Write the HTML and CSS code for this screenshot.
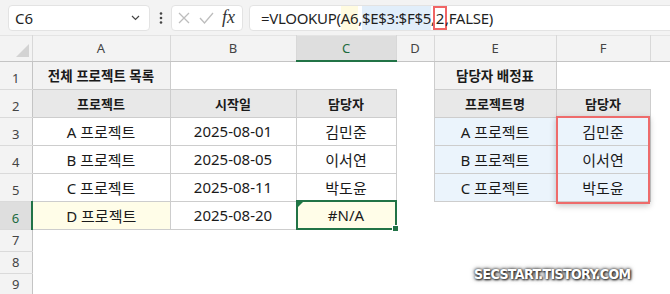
FILE: index.html
```html
<!DOCTYPE html>
<html lang="ko">
<head>
  <meta charset="UTF-8">
  <title>VLOOKUP #N/A</title>
  <link rel="stylesheet" href="styles.css">
</head>
<body>
  <div class="app">
    <div class="formula-bar">
      <div class="name-box">
        <span>C6</span>
        <svg width="9" height="6" viewBox="0 0 9 6"><polyline points="1,1 4.5,4.5 8,1" fill="none" stroke="#444" stroke-width="1.2"/></svg>
      </div>
      <div class="kebab">
        <svg width="4" height="12" viewBox="0 0 4 12"><circle cx="2" cy="1.5" r="1.3" fill="#444"/><circle cx="2" cy="6" r="1.3" fill="#444"/><circle cx="2" cy="10.5" r="1.3" fill="#444"/></svg>
      </div>
      <div class="fx-box">
        <svg width="12" height="12" viewBox="0 0 12 12"><path d="M1 1 L11 11 M11 1 L1 11" stroke="#bdbdbd" stroke-width="1.3"/></svg>
        <svg width="15" height="12" viewBox="0 0 15 12"><polyline points="1,6 5.5,11 14,1" fill="none" stroke="#bdbdbd" stroke-width="1.3"/></svg>
        <span class="fx">fx</span>
      </div>
      <div class="formula">=VLOOKUP(<span class="ref-a">A6</span>,<span class="ref-e">$E$3:$F$5</span>,<span class="mark">2</span>,FALSE)</div>
    </div>

    <table class="sheet">
      <colgroup>
        <col style="width:32px"><col style="width:138px"><col style="width:126px"><col style="width:100px">
        <col style="width:38px"><col style="width:122px"><col style="width:94px"><col style="width:20px">
      </colgroup>
      <tr class="col-head">
        <th class="corner"><svg width="32" height="24" viewBox="0 0 32 24"><polygon points="29,8 29,21 16,21" fill="#d3d3d3"/></svg></th>
        <th>A</th><th>B</th><th class="sel-col">C</th><th>D</th><th>E</th><th>F</th><th></th>
      </tr>
      <tr class="r">
        <td class="rh">1</td>
        <td class="cell title">전체 프로젝트 목록</td><td></td><td></td><td></td>
        <td class="cell title">담당자 배정표</td><td></td><td></td>
      </tr>
      <tr class="r">
        <td class="rh">2</td>
        <td class="cell head">프로젝트</td><td class="cell head">시작일</td><td class="cell head">담당자</td><td></td>
        <td class="cell head">프로젝트명</td><td class="cell head">담당자</td><td></td>
      </tr>
      <tr class="r">
        <td class="rh">3</td>
        <td class="cell">A 프로젝트</td><td class="cell">2025-08-01</td><td class="cell">김민준</td><td></td>
        <td class="cell blue">A 프로젝트</td>
        <td class="cell blue anchor">김민준<div class="result-box"></div></td><td></td>
      </tr>
      <tr class="r">
        <td class="rh">4</td>
        <td class="cell">B 프로젝트</td><td class="cell">2025-08-05</td><td class="cell">이서연</td><td></td>
        <td class="cell blue">B 프로젝트</td><td class="cell blue">이서연</td><td></td>
      </tr>
      <tr class="r">
        <td class="rh">5</td>
        <td class="cell">C 프로젝트</td><td class="cell">2025-08-11</td><td class="cell">박도윤</td><td></td>
        <td class="cell blue">C 프로젝트</td><td class="cell blue">박도윤</td><td></td>
      </tr>
      <tr class="r">
        <td class="rh sel-row">6</td>
        <td class="cell yellow">D 프로젝트</td><td class="cell">2025-08-20</td>
        <td class="cell yellow anchor">#N/A<div class="active"><span class="flag"></span><span class="handle"></span></div></td>
        <td></td><td></td><td></td><td></td>
      </tr>
      <tr class="s"><td class="rh">7</td><td></td><td></td><td></td><td></td><td></td><td></td><td></td></tr>
      <tr class="s"><td class="rh">8</td><td></td><td></td><td></td><td></td><td></td><td></td><td></td></tr>
      <tr class="s"><td class="rh">9</td><td></td><td></td><td></td><td></td><td></td><td></td><td></td></tr>
    </table>

    <div class="watermark">SECSTART.TISTORY.COM</div>
  </div>
</body>
</html>
```

FILE: styles.css
```css
body {
  margin: 0;
  font-family: "Noto Sans", "Noto Sans CJK KR", sans-serif;
  color: #1f1f1f;
  background-color: #fff;
}

.app {
  position: relative;
  width: 670px;
  height: 294px;
  overflow: hidden;
}

/* Formula bar */
.formula-bar {
  height: 35px;
  box-sizing: border-box;
  padding-left: 8px;
  display: flex;
  align-items: center;
  background-color: #f3f3f3;
}

.name-box {
  width: 142px;
  height: 26px;
  box-sizing: border-box;
  padding: 0 9px 0 6px;
  display: flex;
  align-items: center;
  justify-content: space-between;
  background-color: #fff;
  border: 1px solid #e3e3e3;
  border-radius: 4px;
  font-size: 15px;
}

.kebab {
  width: 21px;
  display: flex;
  justify-content: center;
}

.fx-box {
  width: 72px;
  height: 26px;
  box-sizing: border-box;
  padding-left: 6px;
  display: flex;
  align-items: center;
  gap: 9px;
  background-color: #fff;
  border: 1px solid #e3e3e3;
  border-radius: 4px;
}

.fx {
  font-family: "Liberation Serif", serif;
  font-style: italic;
  font-size: 18px;
  color: #333;
  margin-left: -1px;
}

.formula {
  flex: 1;
  height: 26px;
  margin-left: 6px;
  margin-right: -10px;
  box-sizing: border-box;
  padding-left: 11px;
  display: flex;
  align-items: center;
  background-color: #fff;
  border: 1px solid #e3e3e3;
  border-radius: 4px;
  font-size: 15px;
  letter-spacing: -0.3px;
  white-space: pre;
}

.ref-a {
  background-color: #fffbe0;
  line-height: 24px;
}

.ref-e {
  background-color: #e1eefa;
  line-height: 24px;
}

.mark {
  display: inline-block;
  padding: 0 1px;
  line-height: 20px;
  outline: 2px solid #f06565;
  outline-offset: 0;
}

/* Sheet grid */
.sheet {
  width: 670px;
  table-layout: fixed;
  border-collapse: collapse;
}

.sheet td,
.sheet th {
  padding: 0;
  overflow: hidden;
  white-space: nowrap;
}

.sheet td.anchor {
  position: relative;
  overflow: visible;
}

.col-head th {
  height: 24px;
  background-color: #f3f3f3;
  border-top: 1px solid #e4e4e4;
  border-right: 1px solid #d8d8d8;
  border-bottom: 1px solid #c4c4c4;
  font-weight: normal;
  font-size: 13px;
  color: #444;
}

.col-head th.corner {
  line-height: 0;
  text-align: left;
}

.col-head th.sel-col {
  background-color: #dedede;
  color: #1d6b40;
  border-bottom: 2px solid #217346;
}

tr.r {
  height: 28px;
}

tr.s {
  height: 22px;
}

.rh {
  background-color: #f3f3f3;
  border-right: 1px solid #c4c4c4;
  border-bottom: 1px solid #dadada;
  text-align: center;
  vertical-align: bottom;
  padding-bottom: 3px !important;
  font-size: 13px;
  color: #444;
  line-height: 16px;
}

.rh.sel-row {
  background-color: #dedede;
  color: #1d6b40;
  border-right: 2px solid #217346;
}

.cell {
  border: 1px solid #cdcdcd;
  text-align: center;
  font-size: 15px;
  color: #1a1a1a;
}

.cell.title {
  background-color: #f2f2f2;
  font-size: 13.5px;
  font-weight: bold;
}

.cell.head {
  background-color: #e8e8e8;
  font-size: 13px;
  font-weight: bold;
}

.cell.blue {
  background-color: #ebf4fc;
}

.cell.yellow {
  background-color: #fffde8;
}

/* highlighted result range F3:F5 */
.result-box {
  position: absolute;
  top: -2px;
  left: -1px;
  width: 94px;
  height: 88px;
  box-sizing: border-box;
  border: 2px solid #ee6b6b;
  box-shadow: 0 2px 6px rgba(0, 0, 0, 0.22);
  pointer-events: none;
}

/* active cell C6 */
.active {
  position: absolute;
  top: -2px;
  left: -1px;
  right: -1px;
  bottom: -1px;
  border: 2px solid #217346;
}

.flag {
  position: absolute;
  top: 0;
  left: 0;
  width: 0;
  height: 0;
  border-top: 5px solid #1e7a43;
  border-right: 5px solid transparent;
}

.handle {
  position: absolute;
  right: -4px;
  bottom: -4px;
  width: 5px;
  height: 5px;
  background-color: #217346;
  border: 1px solid #fff;
}

.watermark {
  position: absolute;
  left: 474px;
  top: 266px;
  font-family: "DejaVu Sans Condensed", "DejaVu Sans", sans-serif;
  font-weight: bold;
  font-size: 14px;
  letter-spacing: -0.6px;
  color: #fff;
  text-shadow: 0 0 3px #222, 1px 1px 2px #333, 0 0 5px rgba(0, 0, 0, 0.6);
}
```
